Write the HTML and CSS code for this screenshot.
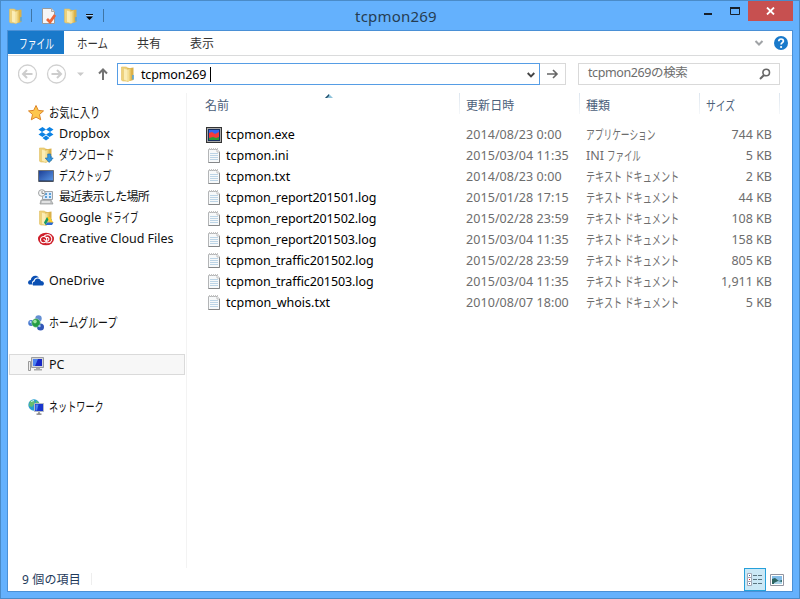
FILE: index.html
```html
<!DOCTYPE html>
<html lang="ja">
<head>
    <meta charset="UTF-8">
    <title>tcpmon269</title>
    <link rel="stylesheet" href="styles.css">
</head>
<body>
    <!-- shared icons -->
    <svg class="defs" width="0" height="0">
        <linearGradient id="gold"><stop offset="0" stop-color="#f8e6a0"/><stop offset="1" stop-color="#dfb64b"/></linearGradient>
        <linearGradient id="screen" x2="1" y2="1"><stop offset="0" stop-color="#1b3d94"/><stop offset="1" stop-color="#5c9ae8"/></linearGradient>
        <symbol id="folder" viewBox="0 0 16 16">
            <path d="M1.500 1h5l1 1h1v13H2.500l-1-1z" fill="#efd27a" stroke="#dfbd60" stroke-width=".6"/>
            <path d="M7 2.500l6.500-1v12.500l-6 1.500z" fill="#d9b04a"/>
            <path d="M3.500 2l4.500 1.500v12l-4.500-1.500z" fill="#fbedb5" stroke="#e2c269" stroke-width=".5"/>
            <path d="M8 3.500l3.500-1.500v12l-3.500 1.500z" fill="url(#gold)"/>
            <path d="M13 9v4.500" stroke="#4fa5e2" stroke-width="1.500"/>
        </symbol>
        <symbol id="note" viewBox="0 0 16 16">
            <path d="M2.500 1.500h9l2 2v11h-11z" fill="#f7f9fa" stroke="#b3b5b7"/>
            <path d="M13.500 4v10.500h-11" fill="none" stroke="#858789"/>
            <path d="M4 5.500h8M4 7.500h8M4 9.500h8M4 11.500h8" stroke="#bcd4e6"/>
            <path d="M3 1h9" stroke="#c4c4c4" stroke-width="2" stroke-dasharray="1 1"/>
            <path d="M11 1v3h3" fill="#fff" stroke="#aaa" stroke-width=".7"/>
        </symbol>
    </svg>
    <div class="window">
        <div class="titlebar">
            <div class="quick">
                <svg class="icon" viewBox="0 0 16 16"><use href="#folder"/></svg>
                <i class="sep"></i>
                <svg class="icon check" viewBox="0 0 16 16"><path d="M1.500.500h9l3 3v12h-12z" fill="#f6f6f6" stroke="#9a9a9a"/><path d="M10.500.500v3h3" fill="#ddd" stroke="#aaa"/><path d="M6 11l3 3 5-7" fill="none" stroke="#e9653a" stroke-width="2.800"/></svg>
                <svg class="icon" viewBox="0 0 16 16"><use href="#folder"/></svg>
                <svg class="drop" viewBox="0 0 7 6"><path d="M0 .5h7" stroke="#111"/><path d="M0 1.500h7" stroke="#a9d5ff"/><path d="M0 2.500h7L3.500 6z" fill="#000"/></svg>
                <i class="sep"></i>
            </div>
            <div class="title">tcpmon269</div>
            <div class="controls">
                <svg width="40" height="20" viewBox="0 0 40 20"><path d="M0 13h8" stroke="#17202a" stroke-width="2"/><path d="M26.500 7v6.500h9V7" fill="none" stroke="#17202a"/><path d="M26 7h10" stroke="#17202a" stroke-width="2"/></svg>
                <div class="close"><svg width="9" height="8" viewBox="0 0 9 8"><path d="M1 .5l7 7M8 .5l-7 7" stroke="#fff" stroke-width="1.800"/></svg></div>
            </div>
        </div>
        <div class="client">
            <div class="tabs">
                <div class="tab file"><span class="kana w-file">ファイル</span></div>
                <div class="tab home"><span class="kana w-home">ホーム</span></div>
                <div class="tab">共有</div>
                <div class="tab">表示</div>
                <svg class="tab-icons" width="35" height="16" viewBox="0 0 35 16"><path d="M1.500 6l3.500 3.500L8.500 6" fill="none" stroke="#a0a3a6" stroke-width="2"/><circle cx="27" cy="8" r="7" fill="#1979ca"/><path d="M24.800 6.300c0-3 4.600-3 4.600-.2 0 1.500-2.300 1.700-2.300 3.400" fill="none" stroke="#fff" stroke-width="1.700"/><circle cx="27.100" cy="12" r="1.100" fill="#fff"/></svg>
            </div>
            <div class="toolbar">
                <svg class="nav" width="92" height="22" viewBox="0 0 92 22">
                    <g fill="none" stroke="#d0d0d0" stroke-width="1.300"><circle cx="9.500" cy="11" r="9"/><circle cx="38.500" cy="11" r="9"/></g>
                    <g fill="none" stroke="#cdcdcd" stroke-width="2"><path d="M5 11H14.500M9 7l-4 4 4 4M33.500 11h9.500M39 7l4 4-4 4"/></g>
                    <path d="M59 9.500h7L62.500 13z" fill="#cacaca"/>
                    <path d="M85 17V6.500M81 10.500l4-4 4 4" fill="none" stroke="#737373" stroke-width="2"/>
                </svg>
                <div class="address">
                    <svg class="icon" viewBox="0 0 16 16"><use href="#folder"/></svg>
                    <span class="path">tcpmon269</span><i class="caret"></i>
                    <svg class="chev" width="8" height="6" viewBox="0 0 8 6"><path d="M.7 1L4 4.300 7.300 1" fill="none" stroke="#444" stroke-width="1.900"/></svg>
                </div>
                <div class="go"><svg width="12" height="10" viewBox="0 0 12 10"><path d="M0 5h10M6 1l4 4-4 4" fill="none" stroke="#666" stroke-width="1.600"/></svg></div>
                <div class="search"><span>tcpmon269の検索</span><svg width="12" height="12" viewBox="0 0 12 12"><circle cx="7.200" cy="4.500" r="3.300" fill="none" stroke="#666" stroke-width="1.600"/><path d="M5 7L1 11" stroke="#666" stroke-width="2"/></svg></div>
            </div>
            <div class="content">
                <div class="sidebar">
                    <div class="item top"><svg class="icon" viewBox="0 0 16 16"><path d="M8 .5l2.300 4.900 5.200.5-4 3.600 1.200 5.300L8 12.100l-4.700 2.700 1.200-5.300-4-3.600 5.200-.5z" fill="#fdc64d" stroke="#dc8428"/></svg><span class="kana w-fav">お気に入り</span></div>
                    <div class="item"><svg class="icon" viewBox="0 0 16 16"><path d="M4.500 1L8 3.500 4 6 .5 3.500zM11.500 1L8 3.500 12 6l3.500-2.500zM4 6l4 2.500L4.500 11 .5 8.500zM12 6L8 8.500l3.500 2.500 4-2.500zM4.500 12L8 9.500l3.500 2.500L8 14.500z" fill="#0b82e4"/></svg><span>Dropbox</span></div>
                    <div class="item"><svg class="icon" viewBox="0 0 16 16"><use href="#folder"/><path d="M9.700 7h3v4h2.500L11.200 15.500 7.200 11h2.500z" fill="#3597e0" stroke="#1769ae" stroke-width=".6"/></svg><span class="kana w-dl">ダウンロード</span></div>
                    <div class="item"><svg class="icon" viewBox="0 0 16 16"><path d="M.5 2.500h15v11H.5z" fill="url(#screen)" stroke="#6c7077"/><path d="M1 13h14" stroke="#242f45"/></svg><span class="kana w-desk">デスクトップ</span></div>
                    <div class="item"><svg class="icon" viewBox="0 0 16 16"><path d="M4.500 2.500h10v8h-10z" fill="#dceafa" stroke="#a2a5a8"/><path d="M3 11h10l2 4H2z" fill="#c5c7c8" stroke="#919394" stroke-width=".7"/><path d="M7 5h2M11 5h2M7 8h2M11 8h2" stroke="#308ad0" stroke-width="1.600"/><circle cx="3.800" cy="4" r="3.300" fill="#f3f5f6" stroke="#a0a3a5"/><path d="M4 2v2.500h2" fill="none" stroke="#777" stroke-width=".8"/><path d="M4 13h8" stroke="#fff"/></svg><span class="recent">最近表示した場所</span></div>
                    <div class="item"><svg class="icon" viewBox="0 0 16 16"><use href="#folder"/><path d="M9 7h3l-4.500 8L6 12.500z" fill="#169b60"/><path d="M9 7h3l3.500 6h-3z" fill="#fdcb28"/><path d="M7.500 15l1.500-2.500h6.500L14 15z" fill="#2b6bd5"/></svg><span>Google</span><span class="kana w-drive">ドライブ</span></div>
                    <div class="item"><svg class="icon" viewBox="0 0 16 16"><ellipse cx="8" cy="8" rx="8" ry="6.300" fill="#cf1f2a"/><circle cx="5.600" cy="8.600" r="3.100" fill="none" stroke="#fff" stroke-width="1.100"/><path d="M6 5.500c1.200-2.200 5-2.600 6.900-.2s.8 6.300-2.700 6.500H8M5.500 8.500c2 0 1.800 3.200 4.500 1.200 2.400-2-.6-4.500-2.200-2.800" fill="none" stroke="#fff" stroke-width="1.100"/></svg><span>Creative Cloud Files</span></div>
                    <div class="item gap"></div>
                    <div class="item top"><svg class="icon" viewBox="0 0 16 16"><path d="M0 10c0-2 1.200-3 2.800-3C3 3.500 7.500 1 11 4.500 6.500 4 6 7 5.500 7.500 3.800 8 3.700 10 4.500 11.500H1z" fill="#0b50b4"/><path d="M5 12.500c-1-2 0-3.800 1.600-4C7 4.500 12 4.500 13 8c3 0 3.800 3.200 2 4.500z" fill="#0b50b4"/></svg><span>OneDrive</span></div>
                    <div class="item gap"></div>
                    <div class="item top"><svg class="icon" viewBox="0 0 16 16"><circle cx="3.200" cy="8" r="3" fill="#4779cf"/><circle cx="10.500" cy="3.500" r="3.200" fill="#638fd3"/><circle cx="12.500" cy="12" r="3.500" fill="#3156b7"/><circle cx="8" cy="8" r="4.300" fill="#259b45" stroke="#a2d4c0" stroke-width=".6"/><circle cx="7" cy="6.600" r="1.800" fill="#9ee39f"/><circle cx="2.500" cy="7" r=".9" fill="#c5dcff"/><circle cx="11.500" cy="11" r="1.200" fill="#a5c1f4"/></svg><span class="kana w-group">ホームグループ</span></div>
                    <div class="item gap"></div>
                    <div class="item top selected"><svg class="icon" viewBox="0 0 16 16"><path d="M.5 4.500h2v9h-2z" fill="#eee" stroke="#999"/><path d="M3.500.500h12v10h-12z" fill="#d3d5d7" stroke="#9b9da0"/><path d="M5 2h9v7H5z" fill="#1827c6"/><path d="M5 2h5L7 9H5z" fill="#4c83ef"/><path d="M8 11h4v1h2v1.500H6V12h2z" fill="#aaa"/></svg><span>PC</span></div>
                    <div class="item gap"></div>
                    <div class="item top"><svg class="icon" viewBox="0 0 16 16"><circle cx="6" cy="6" r="5.700" fill="#279ed0"/><path d="M2 2l4-1 1 3-3 4-3-1zM8 1.500l3 2-3 3z" fill="#65bd71"/><path d="M3 2.500l3-1" stroke="#d3f3ff"/><path d="M6.500 4.500h9v8h-9z" fill="#1936ce" stroke="#b5bbc5"/><path d="M7.500 5.500h3l-1.500 6H7.500z" fill="#4c83ef"/><path d="M11 13v2M8.500 15.200h5" stroke="#777" stroke-width="1.300"/></svg><span class="kana w-net">ネットワーク</span></div>
                </div>
                <div class="list">
                    <div class="head">
                        <div class="name">名前<svg class="sort" width="8" height="4" viewBox="0 0 8 4"><path d="M0 4l4-4 4 4z" fill="#8fc3db"/><path d="M0 4l4-4v2L2 4z" fill="#244f6b"/></svg></div>
                        <div class="date">更新日時</div>
                        <div class="type">種類</div>
                        <div class="size"><span class="kana w-size">サイズ</span></div>
                    </div>
                    <div class="row"><div class="name"><svg class="icon" viewBox="0 0 16 16"><path d="M0 0h16v16H0z" fill="#333"/><path d="M1 1h14v14H1z" fill="#aaa"/><path d="M2 2h12v12H2z" fill="#183060"/><path d="M3 3h10v10H3z" fill="#3566ef"/><path d="M3 6l3-1 3 2 4-2v6H3z" fill="#f43b3b"/><path d="M3 11l4-1 3 1 3-1v3H3z" fill="#2b9a36"/></svg>tcpmon.exe</div><div class="date">2014/08/23 0:00</div><div class="type"><span class="kana w-app">アプリケーション</span></div><div class="size">744 KB</div></div>
                    <div class="row"><div class="name"><svg class="icon"><use href="#note"/></svg>tcpmon.ini</div><div class="date">2015/03/04 11:35</div><div class="type">INI <span class="kana w-ini">ファイル</span></div><div class="size">5 KB</div></div>
                    <div class="row"><div class="name"><svg class="icon"><use href="#note"/></svg>tcpmon.txt</div><div class="date">2014/08/23 0:00</div><div class="type"><span class="kana w-doc">テキスト ドキュメント</span></div><div class="size">2 KB</div></div>
                    <div class="row"><div class="name long"><svg class="icon"><use href="#note"/></svg>tcpmon_report201501.log</div><div class="date">2015/01/28 17:15</div><div class="type"><span class="kana w-doc">テキスト ドキュメント</span></div><div class="size">44 KB</div></div>
                    <div class="row"><div class="name long"><svg class="icon"><use href="#note"/></svg>tcpmon_report201502.log</div><div class="date">2015/02/28 23:59</div><div class="type"><span class="kana w-doc">テキスト ドキュメント</span></div><div class="size">108 KB</div></div>
                    <div class="row"><div class="name long"><svg class="icon"><use href="#note"/></svg>tcpmon_report201503.log</div><div class="date">2015/03/04 11:35</div><div class="type"><span class="kana w-doc">テキスト ドキュメント</span></div><div class="size">158 KB</div></div>
                    <div class="row"><div class="name long"><svg class="icon"><use href="#note"/></svg>tcpmon_traffic201502.log</div><div class="date">2015/02/28 23:59</div><div class="type"><span class="kana w-doc">テキスト ドキュメント</span></div><div class="size">805 KB</div></div>
                    <div class="row"><div class="name long"><svg class="icon"><use href="#note"/></svg>tcpmon_traffic201503.log</div><div class="date">2015/03/04 11:35</div><div class="type"><span class="kana w-doc">テキスト ドキュメント</span></div><div class="size">1,911 KB</div></div>
                    <div class="row"><div class="name"><svg class="icon"><use href="#note"/></svg>tcpmon_whois.txt</div><div class="date">2010/08/07 18:00</div><div class="type"><span class="kana w-doc">テキスト ドキュメント</span></div><div class="size">5 KB</div></div>
                </div>
            </div>
            <div class="status">
                <div class="count">9 個の項目</div>
                <div class="view active"><svg width="16" height="14" viewBox="0 0 16 14"><path d="M.5.5h4v4h-4zM.5 4.500h4v4h-4zM.5 8.500h4v4h-4z" fill="#fff" stroke="#a2a6b5"/><path d="M2 2.500h1M2 10.500h1" stroke="#345ea0"/><path d="M2 6.500h1" stroke="#d22"/><path d="M6 2.500h4M11 2.500h4M6 6.500h4M11 6.500h4M6 10.500h4M11 10.500h4" stroke="#5a7480"/></svg></div>
                <div class="view"><svg width="14" height="12" viewBox="0 0 14 12"><path d="M.5.5h13v11H.5z" fill="#fff" stroke="#9294a0"/><path d="M2 2h10v8H2z" fill="#84bde8"/><path d="M2 5l3-1 4 3 3-1v4H2z" fill="#2c6561"/><path d="M4 9l4-2 4 1v2H4z" fill="#a7d4e9"/></svg></div>
            </div>
        </div>
    </div>
</body>
</html>
```
FILE: styles.css
```css
* {
    box-sizing: border-box;
}
body {
    margin: 0;
    font-family: "Noto Sans", "Noto Sans CJK JP", sans-serif;
    font-size: 12.5px;
    color: #111;
    white-space: nowrap;
    overflow: hidden;
}
svg {
    flex-shrink: 0;
}
.defs {
    display: block;
}
.window {
    width: 800px;
    height: 599px;
    padding: 0 6px 7px;
    border: 1px solid #4a8bc8;
    background-color: #64b1fd;
}
.icon {
    width: 16px;
    height: 16px;
}
.titlebar {
    display: flex;
    height: 29px;
}
.quick {
    display: flex;
    align-items: center;
    width: 240px;
    padding-left: 1px;
}
.sep {
    width: 1px;
    height: 13px;
    margin: 0 9px 0 7px;
    background-color: #3f75a5;
}
.check {
    margin-right: 6px;
}
.drop {
    width: 7px;
    height: 6px;
    margin: 3px 0 0 7px;
}
.drop + .sep {
    margin-left: 10px;
}
.title {
    width: 298px;
    text-align: center;
    font-size: 15px;
    line-height: 30px;
    letter-spacing: 0.2px;
    color: #263d52;
}
.controls {
    display: flex;
    margin-left: auto;
}
.close {
    display: flex;
    align-items: center;
    justify-content: center;
    width: 45px;
    height: 20px;
    margin-left: 4px;
    background-color: #c75050;
}
.client {
    display: flex;
    flex-direction: column;
    height: 562px;
    border: 1px solid #4a90d6;
    background-color: #fff;
}
.tabs {
    display: flex;
    height: 25px;
    border-bottom: 1px solid #dadbdc;
    line-height: 25px;
    font-size: 12px;
    color: #333;
}
.tab {
    width: 53px;
    padding-left: 14px;
}
.tab.file {
    width: 56px;
    height: 23px;
    padding-left: 11px;
    background-color: #1979ca;
    color: #fff;
}
.tab.home {
    width: 59px;
    padding-left: 13px;
}
.tab-icons {
    margin: 4px 3px 0 auto;
}
.toolbar {
    display: flex;
    height: 37px;
    padding: 7px 12px 0 10px;
}
.nav {
    margin-right: 7px;
}
.address {
    display: flex;
    align-items: center;
    width: 423px;
    height: 22px;
    padding: 0 4px 0 2px;
    border: 1px solid #569de5;
}
.path {
    margin-left: 5px;
    letter-spacing: -0.15px;
    color: #000;
}
.caret {
    width: 1px;
    height: 15px;
    margin-left: 4px;
    background-color: #000;
}
.chev {
    margin: 2px 0 0 auto;
}
.go {
    display: flex;
    align-items: center;
    justify-content: center;
    width: 26px;
    height: 22px;
    margin-right: 12px;
    border: 1px solid #d9d9d9;
    border-left: none;
}
.search {
    display: flex;
    align-items: center;
    justify-content: space-between;
    width: 202px;
    height: 22px;
    padding: 0 8px 0 9px;
    border: 1px solid #d9d9d9;
    line-height: 16px;
    color: #6d6d6d;
}
.search span {
    margin-bottom: 3px;
    letter-spacing: -0.4px;
}
.content {
    display: flex;
    flex: 1;
}
.sidebar {
    width: 179px;
    padding: 9px 1px 0 1px;
    border-right: 1px solid #f3f3f3;
}
.item {
    display: flex;
    align-items: center;
    height: 21px;
    padding-left: 29px;
    line-height: 19px;
}
.item.top {
    padding-left: 19px;
}
.item .icon {
    margin-right: 5px;
}
.item.selected {
    padding-left: 18px;
    border: 1px solid #dadada;
    background-color: #f7f7f7;
}
.list {
    width: 605px;
}
.head,
.row {
    display: flex;
}
.head {
    height: 31px;
    line-height: 26px;
    font-size: 12px;
    color: #4c607a;
}
.head > div {
    height: 21px;
    border-right: 1px solid;
    border-image: linear-gradient(#dce5ee, #f6f8fa) 1;
}
.name {
    display: flex;
    align-items: center;
    width: 273px;
    padding-left: 19px;
}
.name.long {
    letter-spacing: -0.09px;
}
.head .name {
    align-items: flex-start;
    padding-left: 18px;
}
.sort {
    margin: 1px 0 0 96px;
}
.name .icon {
    margin-right: 4px;
}
.date {
    width: 120px;
    padding-left: 6px;
    letter-spacing: 0.07px;
}
.type {
    width: 120px;
    padding-left: 6px;
}
.size {
    width: 80px;
    padding-right: 8px;
    text-align: right;
}
.head .size {
    padding-left: 6px;
    text-align: left;
}
.row {
    height: 21px;
    line-height: 21px;
    color: #6d6d6d;
}
.row .name {
    color: #000;
}
.status {
    display: flex;
    height: 23px;
    padding-right: 4px;
}
.count {
    width: 84px;
    height: 12px;
    margin-top: 5px;
    padding-left: 14px;
    border-right: 1px solid #eee;
    line-height: 13px;
    font-size: 12px;
    letter-spacing: 0.15px;
    color: #1e395b;
}
.view {
    display: flex;
    align-items: center;
    justify-content: center;
    width: 22px;
    height: 23px;
}
.view.active {
    margin-left: auto;
    border: 1px solid #26a0da;
    background-color: #cbe8f6;
}
/* narrow kana, as in UI fonts */
.kana {
    display: inline-block;
    font-size: 13px;
    line-height: 18px;
    transform-origin: left;
    transform: scaleX(0.7);
}
.w-file {
    transform: scaleX(0.67);
}
.w-ini {
    transform: scaleX(0.65);
}
.w-home {
    transform: scaleX(0.8);
}
.w-fav {
    transform: scaleX(0.79);
}
.w-dl {
    transform: scaleX(0.71);
}
.w-desk {
    transform: scaleX(0.67);
}
.w-group {
    transform: scaleX(0.76);
}
.w-drive {
    margin-left: 4px;
    transform: scaleX(0.64);
}
.w-app {
    transform: scaleX(0.67);
}
.w-size {
    transform: scaleX(0.75);
}
.item .kana {
    margin-bottom: 2px;
}
.recent {
    margin-bottom: 1px;
    font-size: 12px;
    letter-spacing: -0.75px;
}
```
